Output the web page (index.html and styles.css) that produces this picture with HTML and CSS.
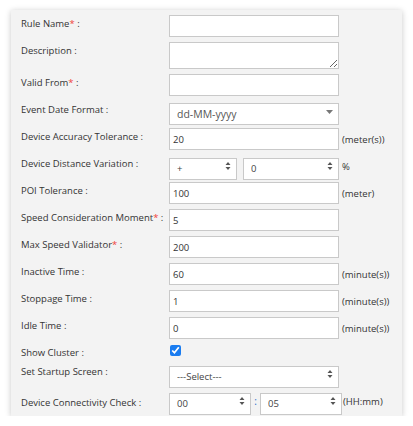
FILE: index.html
```html
<!DOCTYPE html>
<html>
<head>
<meta charset="utf-8">
<link rel="stylesheet" href="styles.css">
</head>
<body>
<div class="panel">
  <div class="row"><label class="lbl">Rule Name<span class="req">*</span> :</label><input class="inp" type="text"></div>
  <div class="row"><label class="lbl">Description :</label><textarea class="inp area"></textarea></div>
  <div class="row"><label class="lbl">Valid From<span class="req">*</span> :</label><input class="inp" type="text"></div>
  <div class="row"><label class="lbl">Event Date Format :</label>
    <div class="sel w170"><select class="selbox big"><option>dd-MM-yyyy</option></select>
      <svg class="arr1" width="7" height="4" viewBox="0 0 7 4"><path d="M0 0H7L3.5 4Z" fill="#777"/></svg></div>
  </div>
  <div class="row"><label class="lbl">Device Accuracy Tolerance :</label><input class="inp" type="text" value="20"><span class="unit">(meter(s))</span></div>
  <div class="row"><label class="lbl">Device Distance Variation :</label>
    <div class="sel w68"><select class="selbox"><option>+</option></select>
      <svg class="arr2" width="6" height="10" viewBox="0 0 6 10"><path d="M0.5 4L3 1L5.5 4ZM0.5 6L3 9L5.5 6Z" fill="#555"/></svg></div>
    <div class="sel w96 gap7"><select class="selbox"><option>0</option></select>
      <svg class="arr2" width="6" height="10" viewBox="0 0 6 10"><path d="M0.5 4L3 1L5.5 4ZM0.5 6L3 9L5.5 6Z" fill="#555"/></svg></div>
    <span class="unit">%</span>
  </div>
  <div class="row"><label class="lbl">POI Tolerance :</label><input class="inp" type="text" value="100"><span class="unit">(meter)</span></div>
  <div class="row"><label class="lbl">Speed Consideration Moment<span class="req">*</span> :</label><input class="inp" type="text" value="5"></div>
  <div class="row"><label class="lbl">Max Speed Validator<span class="req">*</span> :</label><input class="inp" type="text" value="200"></div>
  <div class="row"><label class="lbl">Inactive Time :</label><input class="inp" type="text" value="60"><span class="unit">(minute(s))</span></div>
  <div class="row"><label class="lbl">Stoppage Time :</label><input class="inp" type="text" value="1"><span class="unit">(minute(s))</span></div>
  <div class="row"><label class="lbl">Idle Time :</label><input class="inp" type="text" value="0"><span class="unit">(minute(s))</span></div>
  <div class="row chkrow"><label class="lbl">Show Cluster :</label><input class="chk" type="checkbox" checked></div>
  <div class="row"><label class="lbl">Set Startup Screen :</label>
    <div class="sel w170"><select class="selbox"><option>---Select---</option></select>
      <svg class="arr2" width="6" height="10" viewBox="0 0 6 10"><path d="M0.5 4L3 1L5.5 4ZM0.5 6L3 9L5.5 6Z" fill="#555"/></svg></div>
  </div>
  <div class="row last"><label class="lbl lbl-mid">Device Connectivity Check :</label>
    <div class="sel w82"><select class="selbox"><option>00</option></select>
      <svg class="arr2" width="6" height="10" viewBox="0 0 6 10"><path d="M0.5 4L3 1L5.5 4ZM0.5 6L3 9L5.5 6Z" fill="#555"/></svg></div>
    <span class="colon">:</span>
    <div class="sel w82"><select class="selbox"><option>05</option></select>
      <svg class="arr2" width="6" height="10" viewBox="0 0 6 10"><path d="M0.5 4L3 1L5.5 4ZM0.5 6L3 9L5.5 6Z" fill="#555"/></svg></div>
    <span class="unit tight">(HH:mm)</span>
  </div>
</div>
</body>
</html>
```
FILE: styles.css
```css
html, body {
  margin: 0;
  padding: 0;
  background: #ffffff;
}
body {
  font-family: "Open Sans", "Liberation Sans", sans-serif;
  color: #333;
}
.panel {
  margin: 10px 0 0 11px;
  width: 391px;
  box-sizing: border-box;
  padding: 5px 10px 4px 10px;
  background: #f3f3f3;
  box-shadow: 0 1px 6px rgba(0, 0, 0, 0.22);
}
.row {
  display: flex;
  align-items: flex-start;
  margin-bottom: 5px;
}
.row.last {
  margin-bottom: 0;
}
.lbl {
  width: 148px;
  flex: none;
  font-size: 9.5px;
  line-height: 16px;
  padding-top: 1px;
  color: #333;
  white-space: nowrap;
}
.lbl-mid {
  padding-top: 5px;
}
.req {
  color: #f0413a;
}
.inp {
  flex: none;
  width: 170px;
  height: 22px;
  box-sizing: border-box;
  border: 1px solid #c9c9c9;
  border-radius: 0;
  background: #fff;
  margin: 0;
  padding: 0 3px;
  font-family: "Open Sans", "Liberation Sans", sans-serif;
  font-size: 9.5px;
  color: #333;
  outline: none;
}
.area {
  height: 27px;
  resize: both;
}
.unit {
  align-self: center;
  margin-left: 3px;
  font-size: 9.5px;
  color: #333;
  white-space: nowrap;
}
.unit.tight {
  margin-left: 1px;
}
.colon {
  align-self: center;
  width: 9px;
  text-align: center;
  font-size: 10px;
  color: #2a6fc9;
}
.sel {
  position: relative;
  flex: none;
  height: 22px;
}
.w170 { width: 170px; }
.w68 { width: 68px; }
.w96 { width: 96px; }
.w82 { width: 82px; }
.gap7 { margin-left: 6px; }
.selbox {
  appearance: none;
  -webkit-appearance: none;
  width: 100%;
  height: 22px;
  box-sizing: border-box;
  border: 1px solid #c9c9c9;
  border-radius: 0;
  background: #fff;
  margin: 0;
  padding: 0 0 0 7px;
  font-family: "Open Sans", "Liberation Sans", sans-serif;
  font-size: 9.5px;
  color: #444;
  outline: none;
}
.selbox.big {
  font-size: 10.5px;
  color: #555;
}
.arr1 {
  position: absolute;
  right: 6px;
  top: 9px;
  pointer-events: none;
}
.arr2 {
  position: absolute;
  right: 6px;
  top: 6px;
  pointer-events: none;
}
.chkrow {
  height: 14px;
}
.chk {
  width: 11px;
  height: 11px;
  margin: 1px 0 0 1px;
  accent-color: #1a7cf0;
}
```
